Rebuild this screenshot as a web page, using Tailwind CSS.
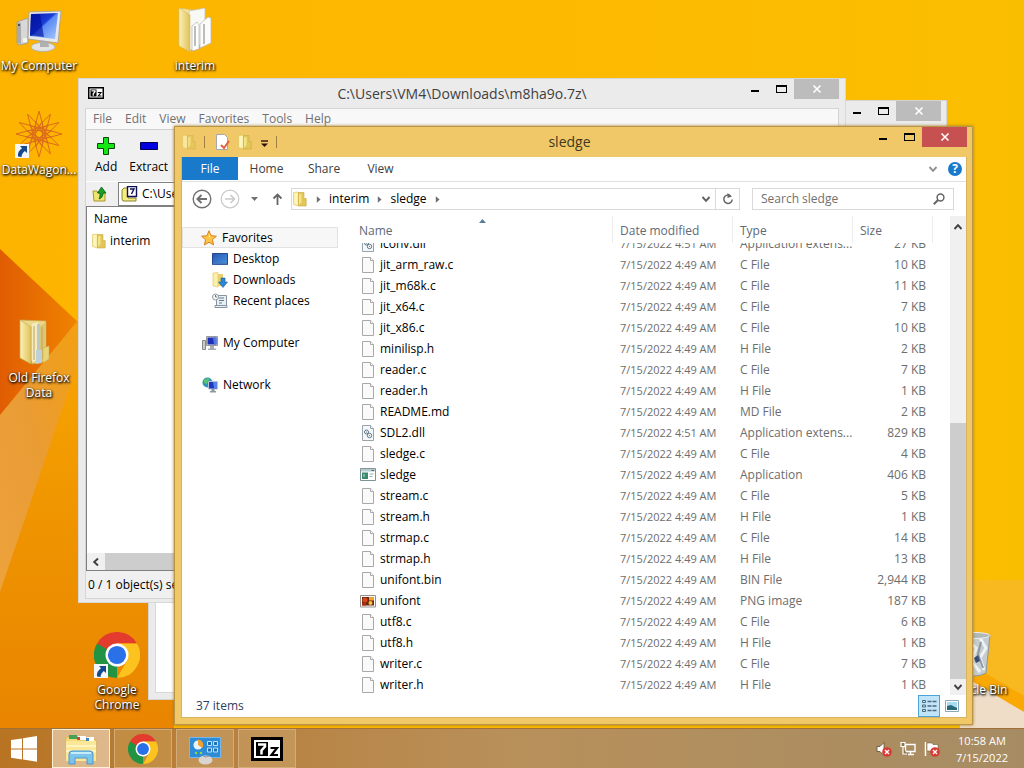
<!DOCTYPE html>
<html lang="en">
<head>
<meta charset="utf-8">
<meta name="viewport" content="width=device-width, initial-scale=1">
<title>sledge</title>
<script src="https://cdn.jsdelivr.net/npm/@tailwindcss/browser@4"></script>
</head>
<body class="font-['Open_Sans','Noto_Sans',sans-serif] text-[12px] leading-4 text-black">

<!-- Shared icon symbols -->
<svg class="absolute h-0 w-0" aria-hidden="true">
  <defs>
    <linearGradient id="fold" x1="0" x2="1"><stop offset="0" stop-color="#fbf0b4"/><stop offset="1" stop-color="#e0c25c"/></linearGradient>
    <linearGradient id="screen" x1="0" y1="0" x2="1" y2="1"><stop offset="0" stop-color="#0818a8"/><stop offset=".45" stop-color="#1a3ed8"/><stop offset=".5" stop-color="#5c8cf4"/><stop offset="1" stop-color="#a8c8ff"/></linearGradient>
    <linearGradient id="blue" x1="0" y1="0" x2="1" y2="1"><stop offset="0" stop-color="#2458b0"/><stop offset="1" stop-color="#4c92e0"/></linearGradient>
  </defs>
  <symbol id="i-folder" viewBox="0 0 16 16">
    <path d="M1.500 1.500l5-.5v14l-5-1.500z" fill="#fbf0a8" stroke="#dcc058" stroke-width=".6"/>
    <path d="M6.500 1.500h5.500v6h2.200v7.500H6.500z" fill="#e2c658" stroke="#ccaa40" stroke-width=".6"/>
    <path d="M7 3.500L9.500 3v8L7 14z" fill="#f4e48c"/>
    <path d="M4 2v11" stroke="#fff6c8" stroke-width="1.400"/>
  </symbol>
  <symbol id="i-file" viewBox="0 0 16 16">
    <path d="M2.500.500h8l3 3v12h-11z" fill="#fafafa" stroke="#a8a8a8"/>
    <path d="M10.500.500v3h3" fill="#fff" stroke="#a8a8a8"/>
  </symbol>
  <symbol id="i-dll" viewBox="0 0 16 16">
    <path d="M2.500.500h8l3 3v12h-11z" fill="#f4f8fa" stroke="#98a4ac"/>
    <path d="M10.500.500v3h3" fill="#fff" stroke="#98a4ac"/>
    <circle cx="6.500" cy="7" r="2" fill="#fff" stroke="#5c7484"/>
    <circle cx="9.500" cy="10.500" r="2.200" fill="#fff" stroke="#5c7484"/>
    <circle cx="9.500" cy="10.500" r=".6" fill="#4c6474"/><circle cx="6.500" cy="7" r=".6" fill="#4c6474"/>
  </symbol>
  <symbol id="i-exe" viewBox="0 0 16 16">
    <path d="M.5 1.500h15v12H.5z" fill="#fff" stroke="#7c9498"/>
    <path d="M1 2h14v2.500H1z" fill="#b8ccd0"/><path d="M11.500 3.500h2.500" stroke="#4c646c"/>
    <path d="M2 5.500h6v6.500H2z" fill="#3c8870"/><path d="M3 7h2v3H3z" fill="#78b49c"/>
    <path d="M9.500 7h4M9.500 9.500h3" stroke="#90b0b0"/>
  </symbol>
  <symbol id="i-png" viewBox="0 0 16 16">
    <path d="M.5 2.500h15v11.500H.5z" fill="#fff" stroke="#989088"/>
    <path d="M2 4h12v8.500H2z" fill="#6c2410"/><circle cx="5" cy="7" r="2.600" fill="#d84818"/><path d="M9 4h5v3.500H9z" fill="#f0a430"/><circle cx="10.500" cy="10" r="2" fill="#f4c440"/><path d="M2 10h4v2.500H2z" fill="#a83010"/>
  </symbol>
  <symbol id="i-bigfolder" viewBox="0 0 36 48">
    <path d="M2 2l15 2v2l-3 37-12-5z" fill="#f4e296" stroke="#d8bc60" stroke-width=".8"/>
    <path d="M12 5l16-3v34l-16 9z" fill="#f8f8f4" stroke="#c4c0b0" stroke-width=".7"/>
    <path d="M15 20l5-4 2 3v24l-7 2z" fill="#fff" stroke="#b0b0ac" stroke-width=".7"/>
    <path d="M23 18l8-7 3 1v25l-11 5z" fill="#fcfcfc" stroke="#b8b8b4" stroke-width=".7"/>
    <path d="M18 20v20M27 18v20" stroke="#a8a8a8" stroke-width="1.500"/>
    <path d="M2 2l11 7v37L2 40z" fill="url(#fold)" stroke="#d4b85c" stroke-width=".6"/>
  </symbol>
  <symbol id="i-fullfolder" viewBox="0 0 36 48">
    <path d="M2 2l26 1v40l-14 3z" fill="#ecd88a" stroke="#c4a850" stroke-width=".7"/>
    <path d="M14 6l6-2v38l-6 2z" fill="#f6ecc0"/><path d="M19 6h3v38h-3z" fill="#b8c8cc"/><path d="M22 8l5-3v36l-5 3z" fill="#ddc670"/>
    <path d="M16 8v34M24 9v32" stroke="#bba45c"/>
    <path d="M18 32h6v13l-6 1z" fill="#c0d0d8"/><path d="M25 30l6-2v13l-6 4z" fill="#ead478" stroke="#c8aa50" stroke-width=".5"/>
    <path d="M2 2l11 7v37L2 40z" fill="url(#fold)" stroke="#c8aa50" stroke-width=".7"/>
  </symbol>
  <symbol id="i-pc" viewBox="0 0 48 44">
    <path d="M2 12l11-4v25L4 35l-2-2z" fill="#d8d8d8" stroke="#989898" stroke-width=".8"/><path d="M2 12l4 1v21l-4-1z" fill="#aaa"/><path d="M8 28h4v4H8z" fill="#f4f4f4"/><circle cx="4" cy="15" r="1" fill="#333"/>
    <ellipse cx="28" cy="37" rx="12" ry="4.500" fill="#e4e4e4" stroke="#aaa" stroke-width=".8"/>
    <path d="M25 29l8 1 1 7h-9z" fill="#b0b0b0"/>
    <path d="M14 2l32-1-3 32-30-4z" fill="#e8e8e8" stroke="#a0a0a0" stroke-width=".8"/>
    <path d="M16 4l27-1-3 26-25-3z" fill="url(#screen)"/><path d="M16 4h9l4 23-14-2z" fill="#0010a0" opacity=".65"/>
  </symbol>
  <symbol id="i-chrome" viewBox="0 0 48 48">
    <path d="M13.600 30L3.200 12A24 24 0 0 1 44.800 12H24z" fill="#e33b2e"/>
    <path d="M24 24L24 48A24 24 0 0 1 3.200 12z" fill="#229342"/>
    <path d="M34.400 30L24 48A24 24 0 0 0 44.800 12H24z" fill="#fcc31e"/>
    <circle cx="24" cy="24" r="12" fill="#fff"/><circle cx="24" cy="24" r="9.500" fill="#2a70e8"/>
  </symbol>
  <symbol id="i-link" viewBox="0 0 14 14">
    <path d="M0 0h14v14H0z" fill="#f4f6f8"/>
    <path d="M5 2h7v7L9.800 7C8 8.500 6.800 10 6.500 13L3 12.500C2.500 9 4 6.500 7 4.300z" fill="#164a8c"/>
  </symbol>
  <symbol id="i-7z" viewBox="0 0 32 24">
    <path d="M0 0h32v24H0z" fill="#000"/><path d="M3 3h26v18H3z" fill="#fff"/><path d="M5 5h12v14H5z" fill="#000"/>
    <path d="M7 7.500h7v2l-3.500 4v4" fill="none" stroke="#fff" stroke-width="2.500"/>
    <path d="M19.500 11h6.500l-5.500 7h6.500" fill="none" stroke="#000" stroke-width="2.200"/>
  </symbol>
  <symbol id="i-x" viewBox="0 0 10 10"><path d="M1.500 1.500l7 7M8.500 1.500l-7 7" fill="none" stroke="currentColor" stroke-width="1.600"/></symbol>
  <symbol id="i-down" viewBox="0 0 10 10"><path d="M1.500 3L5 6.800 8.500 3" fill="none" stroke="currentColor" stroke-width="1.900"/></symbol>
  <symbol id="i-up" viewBox="0 0 10 10"><path d="M1.500 7L5 3.200 8.500 7" fill="none" stroke="currentColor" stroke-width="1.900"/></symbol>
  <symbol id="i-tri" viewBox="0 0 6 8"><path d="M1 0l4.500 4L1 8z" fill="#707070"/></symbol>
  <symbol id="i-err" viewBox="0 0 10 10"><circle cx="5" cy="5" r="4.800" fill="#d83a34"/><path d="M3 3l4 4M7 3L3 7" stroke="#fff" stroke-width="1.400"/></symbol>
</svg>

<div class="relative flex min-h-screen flex-col overflow-hidden bg-[#fdb900]">
  <svg class="absolute inset-0 h-full w-full" viewBox="0 0 1024 768" preserveAspectRatio="none" aria-hidden="true">
    <defs>
      <linearGradient id="sky" x1="0" x2="1"><stop offset="0" stop-color="#fdb400"/><stop offset=".6" stop-color="#fdba00"/><stop offset="1" stop-color="#fabe00"/></linearGradient>
      <linearGradient id="low" x1="0" y1="0" x2="0" y2="1"><stop offset="0" stop-color="#f8a600"/><stop offset=".5" stop-color="#ee9200"/><stop offset="1" stop-color="#e88200"/></linearGradient>
      <linearGradient id="dark" x1="0" y1="0" x2="1" y2="0"><stop offset="0" stop-color="#e05c02"/><stop offset="1" stop-color="#f08400"/></linearGradient>
      <linearGradient id="ray" x1="0" y1="1" x2="1" y2="0"><stop offset="0" stop-color="#eda23c"/><stop offset=".5" stop-color="#ea9c34"/><stop offset="1" stop-color="#f2a010"/></linearGradient>
    </defs>
    <path d="M0 0h1024v768H0z" fill="url(#sky)"/>
    <path d="M0 330h174v438H0z" fill="url(#low)"/>
    <path d="M0 249l79 74v20L0 424z" fill="url(#dark)"/>
    <path d="M79 319v41L0 592V415z" fill="url(#ray)"/>
    <path d="M970 580h54v130l-54-40z" fill="#f7b820"/>
    <path d="M970 664l54 32v72h-54z" fill="#f9a804"/>
    <path d="M960 674l64 38v56h-64z" fill="#f0ddc8"/>
  </svg>

  <main class="relative flex-1">
    <!-- Desktop shortcuts -->
    <div class="text-center text-white">
      <button class="absolute left-0 top-[10px] flex w-[78px] flex-col items-center gap-1"><svg class="h-11 w-12"><use href="#i-pc"/></svg><span class="[text-shadow:1px_1px_2px_#000,0_1px_3px_#000]">My Computer</span></button>
      <button class="absolute left-[156px] top-[6px] flex w-[78px] flex-col items-center gap-1"><svg class="h-12 w-9"><use href="#i-bigfolder"/></svg><span class="[text-shadow:1px_1px_2px_#000,0_1px_3px_#000]">interim</span></button>
      <button class="absolute left-0 top-[110px] flex w-[78px] flex-col items-center gap-1">
        <span class="relative">
          <svg class="h-12 w-12" viewBox="-24 -24 48 48" fill="none" stroke="#dc6c1c" id="wagon" aria-hidden="true"></svg>
          <svg class="absolute bottom-0 left-0 h-[14px] w-[14px]"><use href="#i-link"/></svg>
        </span><span class="[text-shadow:1px_1px_2px_#000,0_1px_3px_#000]">DataWagon...</span></button>
      <button class="absolute left-0 top-[318px] flex w-[78px] flex-col items-center gap-1 pr-[6px]"><svg class="h-12 w-9"><use href="#i-fullfolder"/></svg><span class="ml-[6px] leading-[15px] [text-shadow:1px_1px_2px_#000,0_1px_3px_#000]">Old Firefox<br>Data</span></button>
      <button class="absolute left-[78px] top-[632px] flex w-[78px] flex-col items-center gap-1">
        <span class="relative"><svg class="h-[46px] w-[46px]"><use href="#i-chrome"/></svg><svg class="absolute bottom-0 left-0 h-[14px] w-[14px]"><use href="#i-link"/></svg></span>
        <span class="leading-[15px] [text-shadow:1px_1px_2px_#000,0_1px_3px_#000]">Google<br>Chrome</span></button>
      <button class="absolute right-[6px] top-[632px] flex w-[84px] flex-col items-center gap-1">
        <svg class="h-[46px] w-9" viewBox="0 0 36 46"><path d="M2 3h30l-4 38q-11 6-22 0z" fill="#c4ccd0" stroke="#8c989c"/><path d="M10 8l8 8-4 14 8 10M22 6l6 10-6 10 4 12" fill="none" stroke="#eef2f4" stroke-width="3"/><path d="M23 10l-3 12 5 14" fill="none" stroke="#8c9aa4" stroke-width="2"/><ellipse cx="17" cy="3.500" rx="15" ry="3" fill="#b0b8b8" stroke="#eee"/><path d="M16 26l4-3 2 6-4 2z" fill="#384c78"/></svg>
        <span class="[text-shadow:1px_1px_2px_#000,0_1px_3px_#000]">Recycle Bin</span></button>
    </div>

    <!-- Rear window -->
    <section class="absolute bottom-[28px] left-[148px] right-[77px] top-[100px] flex flex-col border border-[#d4d4d4] bg-[#ebebeb] pr-[5px] pb-[6px] pl-[6px]">
      <header class="flex h-[30px] justify-end">
        <button aria-label="Minimize" class="flex h-5 w-[27px] items-center justify-center"><span class="mt-1 h-[2px] w-2 bg-black"></span></button>
        <button aria-label="Maximize" class="flex h-5 w-[26px] items-center justify-center"><span class="h-2 w-[11px] border border-t-2 border-black"></span></button>
        <button aria-label="Close" class="flex h-5 w-[45px] items-center justify-center bg-[#bcbcbc] text-white"><svg class="h-[10px] w-[10px]"><use href="#i-x"/></svg></button>
      </header>
      <div class="flex-1 border border-[#d8d8d8] bg-white"></div>
    </section>

    <!-- 7-Zip window -->
    <section class="absolute bottom-[125px] left-[78px] right-[178px] top-[78px] flex flex-col border border-[#d8d8d8] bg-[#ebebeb] px-[6px] pb-[3px]">
      <header class="flex h-[29px]">
        <svg class="mt-2 ml-[3px] h-3 w-4"><use href="#i-7z"/></svg>
        <h2 class="flex-1 pt-[5px] pl-[79px] text-center text-[14px] leading-5 text-[#404040]">C:\Users\VM4\Downloads\m8ha9o.7z\</h2>
        <button aria-label="Minimize" class="flex h-5 w-[27px] items-center justify-center"><span class="mt-1 h-[2px] w-2 bg-black"></span></button>
        <button aria-label="Maximize" class="flex h-5 w-[26px] items-center justify-center"><span class="h-2 w-[11px] border border-t-2 border-black"></span></button>
        <button aria-label="Close" class="flex h-5 w-[45px] items-center justify-center bg-[#bcbcbc] text-white"><svg class="h-[10px] w-[10px]"><use href="#i-x"/></svg></button>
      </header>
      <div class="flex min-h-0 flex-1 flex-col border border-[#d4d4d4] bg-[#f0f0f0]">
        <nav class="flex h-[21px] items-center gap-[13px] border-b border-[#d0d0d0] bg-[#f8f8f8] pl-[7px] text-[#707070]"><button>File</button><button>Edit</button><button>View</button><button>Favorites</button><button>Tools</button><button>Help</button></nav>
        <div class="flex h-[51px] gap-3 pt-[6px] pl-[9px]">
          <button class="flex flex-col items-center"><svg class="h-5 w-5" viewBox="0 0 20 20"><path d="M7.500 1.500h5v6h6v5h-6v6h-5v-6h-6v-5h6z" fill="#14e614" stroke="#084808"/></svg><span class="mt-[3px]">Add</span></button>
          <button class="flex flex-col items-center"><svg class="h-5 w-5" viewBox="0 0 20 20"><path d="M1.500 6.500h17v7h-17z" fill="#0000e0" stroke="#000050"/></svg><span class="mt-[3px]">Extract</span></button>
        </div>
        <div class="flex h-[25px] border-t border-white">
          <button aria-label="Up" class="flex w-[27px] items-center justify-center"><svg class="h-4 w-4" viewBox="0 0 16 16"><path d="M1 5h4l1 2h7v8H2z" fill="#f0e470" stroke="#a89830"/><path d="M7 13c3-1 4-3 4-6h3L9.500 1 5.500 7H8c0 2 0 4-1 6z" fill="#18a028" stroke="#086010" stroke-width=".8"/></svg></button>
          <label class="relative ml-[5px] flex flex-1 items-center border border-[#808080] bg-white">
            <svg class="absolute left-[2px] h-4 w-[18px]" viewBox="0 0 18 16"><path d="M1 4l2-2h4v10h8v3H2l-1-2z" fill="#f4ec80" stroke="#8c8430"/><path d="M6.500.500h9v10h-9z" fill="#fff" stroke="#101050" stroke-width="1.400"/><path d="M9 3h4l-2.500 5" fill="none" stroke="#101050" stroke-width="1.400"/></svg>
            <select aria-label="Path" class="w-full appearance-none bg-transparent pl-[23px]"><option>C:\Users\VM4\Downloads\m8ha9o.7z\</option></select>
          </label>
        </div>
        <div class="flex min-h-0 flex-1 flex-col border border-[#808080] bg-white">
          <div class="flex h-6 items-center pl-[7px]">Name</div>
          <div class="flex h-5 items-center gap-[3px] pl-[4px]"><svg class="h-4 w-4"><use href="#i-folder"/></svg>interim</div>
          <div class="mt-auto flex h-[17px] bg-[#f0f0f0]"><button aria-label="Scroll left" class="flex w-[18px] items-center justify-center text-[#404040]"><svg class="h-[10px] w-[10px] -rotate-90"><use href="#i-up"/></svg></button><div class="flex-1 bg-[#cdcdcd]"></div></div>
        </div>
        <footer class="flex h-[27px] items-center pl-[2px]">0 / 1 object(s) selected</footer>
      </div>
    </section>

    <!-- Explorer window -->
    <section class="absolute bottom-[3px] left-[174px] right-[51px] top-[126px] flex flex-col border border-[#b89448] bg-[#f0c868] pr-[5px] pb-[6px] pl-[6px] shadow-[0_0_3px_#a07820]">
      <header class="flex h-[30px] bg-[#f0c868]">
        <div class="flex w-[128px] items-center gap-[7px]">
          <svg class="h-4 w-4 opacity-70"><use href="#i-folder"/></svg>
          <span class="h-3 w-px bg-[#a08040]"></span>
          <svg class="ml-[2px] h-4 w-4" viewBox="0 0 16 16"><path d="M2.500.500h8l3 3v12h-11z" fill="#fff" stroke="#a8a8a8"/><path d="M7 11l3 3 5-7" fill="none" stroke="#e06040" stroke-width="2"/></svg>
          <svg class="h-4 w-4"><use href="#i-folder"/></svg>
          <svg class="h-4 w-[9px]" viewBox="0 0 9 16"><path d="M1 7h7" stroke="#301010" stroke-width="1.400"/><path d="M1 9.500h7L4.500 13z" fill="#301010"/></svg>
          <span class="h-3 w-px bg-[#a08040]"></span>
        </div>
        <h1 class="flex-1 pt-[5px] pr-[39px] text-center text-[14px] leading-5 text-[#403820]">sledge</h1>
        <button aria-label="Minimize" class="flex h-5 w-[27px] items-center justify-center"><span class="mt-1 h-[2px] w-2 bg-black"></span></button>
        <button aria-label="Maximize" class="flex h-5 w-[26px] items-center justify-center"><span class="h-2 w-[11px] border border-t-2 border-black"></span></button>
        <button aria-label="Close" class="flex h-5 w-[45px] items-center justify-center bg-[#c75050] text-white"><svg class="h-[10px] w-[10px]"><use href="#i-x"/></svg></button>
      </header>

      <div class="flex min-h-0 flex-1 flex-col border border-t-0 border-[#d8b460] bg-white">
        <nav class="flex h-[25px] items-center border-b border-[#e0e0e0] text-[#404040]">
          <button class="h-[23px] w-14 self-start bg-[#1979ca] text-white">File</button>
          <button class="w-[57px]">Home</button><button class="w-[58px]">Share</button><button class="w-[55px]">View</button>
          <button aria-label="Expand ribbon" class="ml-auto text-[#909090]"><svg class="h-[10px] w-[10px]"><use href="#i-down"/></svg></button>
          <button aria-label="Help" class="mr-[4px] ml-[10px] h-[14px] w-[14px] rounded-full bg-[#1979ca] text-[12px] leading-[14px] font-bold text-white">?</button>
        </nav>

        <div class="flex h-[34px] items-center pr-[12px] pl-[10px]">
          <button aria-label="Back"><svg class="h-5 w-5" viewBox="0 0 20 20" fill="none" stroke="#707070"><circle cx="10" cy="10" r="8.800" stroke-width="1.400"/><path d="M15 10H6M9.500 6L5.500 10l4 4" stroke-width="2"/></svg></button>
          <button aria-label="Forward" class="ml-[8px]"><svg class="h-5 w-5" viewBox="0 0 20 20" fill="none" stroke="#cacaca"><circle cx="10" cy="10" r="8.800" stroke-width="1.200"/><path d="M5 10h9M10.500 6l4 4-4 4" stroke-width="1.600"/></svg></button>
          <button aria-label="Recent locations" class="ml-[11px]"><svg class="h-1 w-[7px]" viewBox="0 0 7 4"><path d="M0 0h7L3.500 4z" fill="#707070"/></svg></button>
          <button aria-label="Up" class="ml-[14px]"><svg class="h-3 w-[11px]" viewBox="0 0 11 12"><path d="M5.500 12V1.500M1.500 5.500l4-4 4 4" fill="none" stroke="#666" stroke-width="1.800"/></svg></button>
          <div class="ml-[8px] flex h-[22px] flex-1 items-center border border-[#d9d9d9]">
            <svg class="h-4 w-4"><use href="#i-folder"/></svg>
            <svg class="mx-[8px] h-[7px] w-[5px]"><use href="#i-tri"/></svg><button>interim</button>
            <svg class="mx-[8px] h-[7px] w-[5px]"><use href="#i-tri"/></svg><button>sledge</button>
            <svg class="mx-[8px] h-[7px] w-[5px]"><use href="#i-tri"/></svg>
            <button aria-label="Previous locations" class="mr-1 ml-auto text-[#606060]"><svg class="h-[10px] w-[10px]"><use href="#i-down"/></svg></button>
            <button aria-label="Refresh" class="flex h-full w-6 items-center justify-center border-l border-[#d9d9d9]"><svg class="h-3 w-3" viewBox="0 0 12 12"><path d="M8.500 2.800A4.200 4.200 0 1 0 10.200 6.500" fill="none" stroke="#666" stroke-width="1.500"/><path d="M5.500 0v5L10 3.500z" fill="#666"/></svg></button>
          </div>
          <label class="ml-3 flex h-[22px] w-[202px] items-center border border-[#d9d9d9] px-[8px]">
            <input type="search" aria-label="Search sledge" placeholder="Search sledge" class="min-w-0 flex-1 bg-transparent outline-none placeholder:text-[#707070]">
            <svg class="h-3 w-3" viewBox="0 0 12 12" fill="none" stroke="#666"><circle cx="7.500" cy="4.500" r="3.400" stroke-width="1.500"/><path d="M5 7L.8 11.200" stroke-width="2"/></svg>
          </label>
        </div>

        <div class="flex min-h-0 flex-1">
          <aside class="w-[170px] pt-[11px]">
            <ul>
              <li class="mr-[14px] flex h-[21px] items-center gap-[5px] border border-[#e2e2e2] bg-[#f7f7f7] pl-[18px]"><svg class="h-4 w-4" viewBox="0 0 16 16"><path d="M8 .8l2.100 4.900 5.300.5-4 3.500 1.200 5.200L8 12.200l-4.600 2.700 1.200-5.200-4-3.500 5.300-.5z" fill="#fbc548" stroke="#d8801c"/><path d="M8 3l1 3.500L8 8z" fill="#fff0b0"/></svg><a href="#favorites">Favorites</a></li>
              <li class="flex h-[21px] items-center gap-[5px] pl-[30px]"><svg class="h-4 w-4" viewBox="0 0 16 16"><path d="M.5 2.500h15v11H.5z" fill="url(#blue)" stroke="#24488c"/><path d="M1 12h14v1.500H1z" fill="#4878b8"/></svg><a href="#desktop">Desktop</a></li>
              <li class="flex h-[21px] items-center gap-[5px] pl-[30px]"><svg class="h-4 w-4" viewBox="0 0 16 16"><path d="M1 1l5-.5V15l-5-1z" fill="#fbf0a8" stroke="#dcc058" stroke-width=".6"/><path d="M6 2h5v12H6z" fill="#e8d070"/><path d="M9 6h4v4h2.500L11 15.500 6.500 10H9z" fill="#2c88d4" stroke="#1c5c9c" stroke-width=".6"/></svg><a href="#downloads">Downloads</a></li>
              <li class="flex h-[21px] items-center gap-[5px] pl-[30px]"><svg class="h-4 w-4" viewBox="0 0 16 16"><path d="M4.500 2.500h10v10h-10zM3 12.500h12v2H3z" fill="#e8eef2" stroke="#8494a0"/><path d="M7 5h5M7 7.500h5M7 10h3" stroke="#607c94"/><circle cx="3.500" cy="4" r="3" fill="#f8f8f8" stroke="#909aa0"/><path d="M3.500 2v2H5" fill="none" stroke="#555" stroke-width=".8"/></svg><a href="#recent">Recent places</a></li>
              <li class="mt-[21px] flex h-[21px] items-center gap-[5px] pl-[20px]"><svg class="h-4 w-4" viewBox="0 0 16 16"><path d="M.5 5.500h3v9h-3z" fill="#c8ccd0" stroke="#888"/><path d="M4.500 1.500h11v9h-11z" fill="#e8e8e8" stroke="#999"/><path d="M5.500 2.500h9v7h-9z" fill="#1c30b8"/><path d="M11 2.500h3.500v7H12z" fill="#5478e0"/><path d="M8 11h4v2.500H8zM6 13.500h8V15H6z" fill="#a8acb0"/></svg><a href="#computer">My Computer</a></li>
              <li class="mt-[21px] flex h-[21px] items-center gap-[5px] pl-[20px]"><svg class="h-4 w-4" viewBox="0 0 16 16"><circle cx="5.500" cy="5.500" r="5" fill="#2c94b8"/><path d="M2 3q3-3 6-1l-2 2-1 3-3-1z" fill="#58c470"/><path d="M6.500 4.500h9v7.500h-9z" fill="#1c38c0" stroke="#b8c4d4"/><path d="M11 5h4v6h-3z" fill="#5484e8"/><path d="M9.500 12h3v2h-3zM8 14h6v1.500H8z" fill="#8c98a4"/></svg><a href="#network">Network</a></li>
            </ul>
          </aside>

          <!-- The list is scrolled to its end: the first row lies partly under the sticky header -->
          <div class="min-w-0 flex-1 overflow-hidden">
            <table class="-mt-[10px] w-full table-fixed border-separate border-spacing-0 text-[#6d6d6d]">
              <colgroup><col><col class="w-[120px]"><col class="w-[120px]"><col class="w-[80px]"><col class="w-[17px]"></colgroup>
              <thead class="text-left text-[#606a78]">
                <tr>
                  <th class="sticky top-0 z-10 h-[27px] bg-white p-0 pl-[7px] font-normal"><div class="relative h-[27px] border-r border-[#ececec] pt-[7px]">Name<svg class="absolute top-[3px] left-[120px] h-1 w-[7px]" viewBox="0 0 7 4"><path d="M0 4h7L3.500 0z" fill="#5c7c98"/></svg></div></th>
                  <th class="sticky top-0 z-10 h-[27px] bg-white p-0 font-normal"><div class="h-[27px] border-r border-[#ececec] pt-[7px] pl-[7px]">Date modified</div></th>
                  <th class="sticky top-0 z-10 h-[27px] bg-white p-0 font-normal"><div class="h-[27px] border-r border-[#ececec] pt-[7px] pl-[7px]">Type</div></th>
                  <th class="sticky top-0 z-10 h-[27px] bg-white p-0 font-normal"><div class="h-[27px] border-r border-[#ececec] pt-[7px] pl-[7px]">Size</div></th>
                  <td class="sticky top-0 z-10 bg-white p-0"></td>
                </tr>
              </thead>
              <tbody id="files"></tbody>
            </table>
          </div>

          <div class="flex w-4 flex-col bg-[#f0f0f0] text-[#404040]">
            <button aria-label="Scroll up" class="flex h-[22px] items-center justify-center"><svg class="h-[10px] w-[10px]"><use href="#i-up"/></svg></button>
            <div class="flex flex-1 flex-col justify-end"><div class="h-[58%] bg-[#cdcdcd]"></div></div>
            <button aria-label="Scroll down" class="flex h-4 items-center justify-center"><svg class="h-[10px] w-[10px]"><use href="#i-down"/></svg></button>
          </div>
        </div>

        <footer class="flex h-[22px] items-center pr-[5px] pl-[14px] text-[#30405c]">
          <span>37 items</span>
          <button aria-label="Details view" class="ml-auto flex h-[22px] w-[22px] items-center justify-center border border-[#4ca4d8] bg-[#c0e4f8]"><svg class="h-4 w-4" viewBox="0 0 16 16" fill="none" stroke="#50687c"><path d="M1.500 2.500h3v2h-3zM1.500 7h3v2h-3zM1.500 11.500h3v2h-3z"/><path d="M6.500 3.500h4M11.500 3.500h4M6.500 8h4M11.500 8h4M6.500 12.500h4M11.500 12.500h4" stroke-width="1.300"/></svg></button>
          <button aria-label="Thumbnail view" class="ml-[3px] flex h-[22px] w-[18px] items-center justify-center"><svg class="h-3 w-[14px]" viewBox="0 0 14 12"><path d="M.5.500h13v11H.5z" fill="#fff" stroke="#88a8b8"/><path d="M2 2h10v8H2z" fill="#a8dcf4"/><path d="M2 6l4-1 6 3v2H2z" fill="#286878"/></svg></button>
        </footer>
      </div>
    </section>
  </main>

  <!-- Taskbar -->
  <footer class="relative flex h-10 items-center border-t border-[#a07038] bg-linear-to-r from-[#b87422] via-[#b8905a] to-[#a68c64]">
    <button aria-label="Start" class="flex h-full w-[52px] items-center pl-[10px]"><svg class="h-7 w-7" viewBox="0 0 28 28" fill="#fff"><path d="M1 5l11-1.600v10H1zM13 3.200L27 1v12.400H13zM1 14.400h11v10L1 22.800zM13 14.400h14v12.400l-14-2.200z"/></svg></button>
    <div class="flex h-full gap-1">
      <button aria-label="File Explorer" class="flex w-[58px] items-center justify-center border border-[#fdf0d8] bg-[#dcb88a]">
        <svg class="h-8 w-8" viewBox="0 0 32 32"><path d="M1 4h10l2 3h18v19H1z" fill="#f4dc78" stroke="#d4b450" stroke-width=".7"/><path d="M4 2h8v4H4z" fill="#48a058"/><path d="M13 3h8v4h-8z" fill="#fff"/><path d="M12 4h3v3h-3z" fill="#d04830"/><path d="M22 4h7v4h-7z" fill="#fff"/><path d="M21 5h3v3h-3z" fill="#3c84c8"/><path d="M1 8h30v20H1z" fill="#fae898"/><path d="M1 13h30M1 18h30" stroke="#fff4c0" stroke-width="2"/><path d="M4 31V21q0-3 3-3h18q3 0 3 3v10h-6v-6H10v6z" fill="#7cc4ec" stroke="#4898cc"/><path d="M6 20h20" stroke="#c8ecfc" stroke-width="2"/></svg></button>
      <button aria-label="Google Chrome" class="flex w-[58px] items-center justify-center border border-[#d4ac78] bg-[#c8984f]/60"><svg class="h-[30px] w-[30px]"><use href="#i-chrome"/></svg></button>
      <button aria-label="Control Panel" class="flex w-[58px] items-center justify-center border border-[#d4ac78] bg-[#c8a068]/60">
        <svg class="h-8 w-8" viewBox="0 0 32 32"><path d="M.5 4.500h31v20H.5z" fill="#2c8cd8" stroke="#78b8e8"/><circle cx="9" cy="12" r="4.500" fill="#e8f4fc"/><path d="M9 12V6.500a5.500 5.500 0 0 1 4.500 8.500z" fill="#f0a030"/><path d="M18.500 8.500h4v4h-4zM24.500 8.500h4v4h-4zM18.500 15h4v4h-4zM24.500 15h4v4h-4z" fill="#2070b8" stroke="#b8e4fc"/><circle cx="7" cy="20" r="1.200" fill="#98d840"/><circle cx="12" cy="20" r="1.200" fill="#98d840"/><ellipse cx="16.500" cy="27" rx="7" ry="4.500" fill="#d8d4d0"/><path d="M14 23q3 2 6 0" fill="none" stroke="#999"/></svg></button>
      <button aria-label="7-Zip" class="flex w-[58px] items-center justify-center border border-[#d4ac78] bg-[#c8a068]/60"><svg class="h-6 w-8"><use href="#i-7z"/></svg></button>
    </div>
    <div class="ml-auto flex items-center gap-2 pr-4">
      <button aria-label="Volume muted"><svg class="h-4 w-4" viewBox="0 0 16 16"><path d="M1 5.500h3l4-4v13l-4-4H1z" fill="#fff" stroke="#5c4c30" stroke-width=".8"/><svg x="6" y="6" width="10" height="10"><use href="#i-err"/></svg></svg></button>
      <button aria-label="Network"><svg class="h-4 w-4" viewBox="0 0 16 16"><path d="M5.500 3.500h9.500v7H5.500zM8 13.500h6M10.500 11v2" fill="none" stroke="#fff" stroke-width="1.400"/><path d="M1 1.500h4v4H1zM3 6v7h4" fill="#8c7450" stroke="#fff" stroke-width="1.200"/></svg></button>
      <button aria-label="Action Center"><svg class="h-4 w-4" viewBox="0 0 16 16"><path d="M1.500 1v14" stroke="#fff" stroke-width="1.500"/><path d="M3 2h5l1 1.500h5V10H3z" fill="#fff" stroke="#5c4c30" stroke-width=".5"/><svg x="6" y="6" width="10" height="10"><use href="#i-err"/></svg></svg></button>
      <button class="ml-2 text-center text-[11px] leading-[17px] text-white">10:58 AM<br>7/15/2022</button>
    </div>
  </footer>
</div>

<script>
  // [name, time of the last change, type, size in KB, icon]
  const files = [
    ['iconv.dll', '4:51', 'Application extens...', '27', 'dll'],
    ['jit_arm_raw.c', '4:49', 'C File', '10', 'file'],
    ['jit_m68k.c', '4:49', 'C File', '11', 'file'],
    ['jit_x64.c', '4:49', 'C File', '7', 'file'],
    ['jit_x86.c', '4:49', 'C File', '10', 'file'],
    ['minilisp.h', '4:49', 'H File', '2', 'file'],
    ['reader.c', '4:49', 'C File', '7', 'file'],
    ['reader.h', '4:49', 'H File', '1', 'file'],
    ['README.md', '4:49', 'MD File', '2', 'file'],
    ['SDL2.dll', '4:51', 'Application extens...', '829', 'dll'],
    ['sledge.c', '4:49', 'C File', '4', 'file'],
    ['sledge', '4:49', 'Application', '406', 'exe'],
    ['stream.c', '4:49', 'C File', '5', 'file'],
    ['stream.h', '4:49', 'H File', '1', 'file'],
    ['strmap.c', '4:49', 'C File', '14', 'file'],
    ['strmap.h', '4:49', 'H File', '13', 'file'],
    ['unifont.bin', '4:49', 'BIN File', '2,944', 'file'],
    ['unifont', '4:49', 'PNG image', '187', 'png'],
    ['utf8.c', '4:49', 'C File', '6', 'file'],
    ['utf8.h', '4:49', 'H File', '1', 'file'],
    ['writer.c', '4:49', 'C File', '7', 'file'],
    ['writer.h', '4:49', 'H File', '1', 'file'],
  ];
  document.getElementById('files').innerHTML = files.map(([name, time, type, size, icon]) => `
    <tr class="whitespace-nowrap">
      <td class="h-[21px] p-0 pl-[8px] text-black"><div class="flex items-center gap-[4px]"><svg class="h-4 w-4"><use href="#i-${icon}"/></svg>${name}</div></td>
      <td class="h-[21px] p-0 pl-[7px] text-[11px]">7/15/2022 ${time} AM</td>
      <td class="h-[21px] p-0 pl-[7px]">${type}</td>
      <td class="h-[21px] p-0 pr-[7px] text-right">${size} KB</td>
      <td class="p-0"></td>
    </tr>`).join('');

  // Nested twelve-pointed stars form the rosette of the DataWagon shortcut
  const star = (r, step, turn) => 'M' + Array.from({ length: 12 }, (_, i) => {
    const a = (i * step * 30 + turn) * Math.PI / 180;
    return (r * Math.cos(a)).toFixed(2) + ' ' + (r * Math.sin(a)).toFixed(2);
  }).join('L') + 'z';
  document.getElementById('wagon').innerHTML =
    `<path d="${star(23, 5, 0)}"/><path d="${star(13, 5, 15)}"/>`;
</script>
</body>
</html>
